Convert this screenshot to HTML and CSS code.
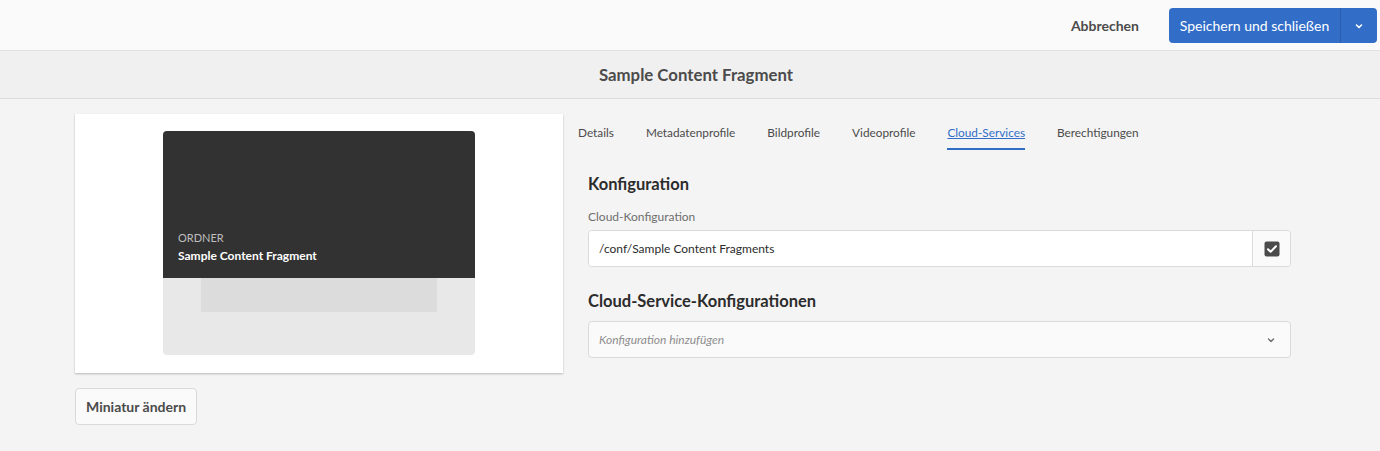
FILE: index.html
```html
<!DOCTYPE html>
<html lang="de">
<head>
<meta charset="utf-8">
<title>Sample Content Fragment</title>
<link rel="stylesheet" href="styles.css">
</head>
<body>
<header class="actionbar">
  <button class="btn-quiet">Abbrechen</button>
  <div class="split">
    <button class="split-main">Speichern und schließen</button>
    <button class="split-toggle" aria-label="Mehr">
      <svg width="10" height="10" viewBox="0 0 10 10"><path d="M2.5 4l2.5 2.5L7.5 4" fill="none" stroke="#fff" stroke-width="1.6" stroke-linecap="round" stroke-linejoin="round"/></svg>
    </button>
  </div>
</header>
<div class="titlebar">Sample Content Fragment</div>
<main class="content">
  <section class="left">
    <div class="card">
      <div class="thumb">
        <div class="thumb-top">
          <div class="thumb-type">ORDNER</div>
          <div class="thumb-name">Sample Content Fragment</div>
        </div>
        <div class="thumb-bottom"><div class="thumb-inner"></div></div>
      </div>
    </div>
    <button class="btn-secondary">Miniatur ändern</button>
  </section>
  <section class="right">
    <nav class="tabs">
      <a class="tab">Details</a>
      <a class="tab">Metadatenprofile</a>
      <a class="tab">Bildprofile</a>
      <a class="tab">Videoprofile</a>
      <a class="tab active">Cloud-Services</a>
      <a class="tab">Berechtigungen</a>
    </nav>
    <div class="panel">
      <h2 class="heading">Konfiguration</h2>
      <label class="label">Cloud-Konfiguration</label>
      <div class="pathfield">
        <div class="pathfield-input">/conf/Sample Content Fragments</div>
        <div class="pathfield-btn">
          <svg width="16" height="16" viewBox="0 0 16 16"><rect x="0.5" y="0.5" width="15" height="15" rx="2" fill="#4b4b4b"/><path d="M4 8.2l2.6 2.6L12 5.2" fill="none" stroke="#fff" stroke-width="2" stroke-linecap="round" stroke-linejoin="round"/></svg>
        </div>
      </div>
      <h2 class="heading heading-2">Cloud-Service-Konfigurationen</h2>
      <div class="select">
        <span class="placeholder">Konfiguration hinzufügen</span>
        <svg width="10" height="10" viewBox="0 0 10 10"><path d="M2.5 4l2.5 2.5L7.5 4" fill="none" stroke="#6e6e6e" stroke-width="1.4" stroke-linecap="round" stroke-linejoin="round"/></svg>
      </div>
    </div>
  </section>
</main>
</body>
</html>
```
FILE: styles.css
```css
* { box-sizing: border-box; }
html, body { margin: 0; padding: 0; }
body {
  font-family: Lato, "Open Sans", sans-serif;
  background: #f4f4f4;
  color: #4b4b4b;
  width: 1380px;
  height: 451px;
  overflow: hidden;
}
button { font-family: inherit; cursor: pointer; }

.actionbar {
  height: 51px;
  background: #fafafa;
  border-bottom: 1px solid #e1e1e1;
  display: flex;
  align-items: center;
  justify-content: flex-end;
  padding: 0 3px 0 0;
  gap: 18px;
}
.btn-quiet {
  background: none;
  border: none;
  font-size: 14px;
  font-weight: 700;
  color: #4b4b4b;
  padding: 0 12px;
  height: 35px;
}
.split {
  display: flex;
  height: 35px;
  margin-top: 1px;
  border-radius: 4px;
  background: #326ec8;
  overflow: hidden;
}
.split-main {
  border: none;
  background: transparent;
  color: #fff;
  font-size: 14px;
  padding: 0;
  width: 172px;
  white-space: nowrap;
  border-right: 1px solid #2a5fae;
}
.split-toggle {
  border: none;
  background: transparent;
  width: 36px;
  display: flex;
  align-items: center;
  justify-content: center;
  padding: 0;
}

.titlebar {
  height: 48px;
  background: #f0f0f0;
  border-bottom: 1px solid #dcdcdc;
  display: flex;
  align-items: center;
  justify-content: center;
  padding-left: 12px;
  font-size: 16.8px;
  font-weight: 700;
  color: #4b4b4b;
}

.content {
  display: flex;
  padding: 15px 0 0 75px;
  gap: 12px;
}
.left { width: 488px; }
.card {
  background: #fff;
  height: 259px;
  box-shadow: 0 1px 2px rgba(0,0,0,0.25);
  display: flex;
  justify-content: center;
  padding-top: 17px;
}
.thumb {
  width: 312px;
  height: 224px;
  border-radius: 4px;
  overflow: hidden;
  background: #e8e8e8;
  display: flex;
  flex-direction: column;
}
.thumb-top {
  height: 147px;
  background: #323232;
  display: flex;
  flex-direction: column;
  justify-content: flex-end;
  padding: 0 15px 15px;
}
.thumb-type {
  font-size: 11px;
  color: #bdbdbd;
  margin-bottom: 4px;
}
.thumb-name {
  font-size: 12px;
  font-weight: 700;
  color: #fff;
}
.thumb-bottom {
  display: flex;
  justify-content: center;
}
.thumb-inner {
  width: 236px;
  height: 34px;
  background: #dcdcdc;
}
.btn-secondary {
  margin-top: 15px;
  height: 37px;
  padding: 0 10px;
  background: #fafafa;
  border: 1px solid #dadada;
  border-radius: 4px;
  font-size: 14px;
  font-weight: 700;
  color: #4b4b4b;
}

.right { width: 715px; }
.tabs {
  display: flex;
  gap: 32px;
  padding-left: 3px;
  height: 36px;
}
.tab {
  font-size: 11.8px;
  color: #4b4b4b;
  padding-top: 11px;
  height: 36px;
  position: relative;
}
.tab.active {
  color: #326ec8;
  text-decoration: underline;
}
.tab.active::after {
  content: "";
  position: absolute;
  left: 0; right: 0;
  top: 34px;
  height: 2px;
  background: #326ec8;
}
.panel { padding-left: 13px; }
.heading {
  margin: 0;
  font-size: 16.5px;
  font-weight: 700;
  color: #2c2c2c;
  padding-top: 24px;
  line-height: 20px;
}
.heading-2 { padding-top: 24px; }
.label {
  display: block;
  font-size: 12px;
  color: #6e6e6e;
  margin-top: 15px;
  line-height: 15px;
}
.pathfield {
  margin-top: 6px;
  display: flex;
  height: 37px;
  width: 703px;
  border: 1px solid #dadada;
  border-radius: 4px;
  overflow: hidden;
}
.pathfield-input {
  flex: 1;
  background: #fff;
  font-size: 12px;
  color: #2c2c2c;
  padding: 0 10px;
  display: flex;
  align-items: center;
}
.pathfield-btn {
  width: 38px;
  background: #fafafa;
  border-left: 1px solid #dadada;
  display: flex;
  align-items: center;
  justify-content: center;
}
.select {
  margin-top: 10px;
  width: 703px;
  height: 37px;
  background: #fafafa;
  border: 1px solid #dadada;
  border-radius: 4px;
  display: flex;
  align-items: center;
  justify-content: space-between;
  padding: 0 14px 0 10px;
}
.placeholder {
  font-size: 12px;
  font-style: italic;
  color: #8e8e8e;
}
```
